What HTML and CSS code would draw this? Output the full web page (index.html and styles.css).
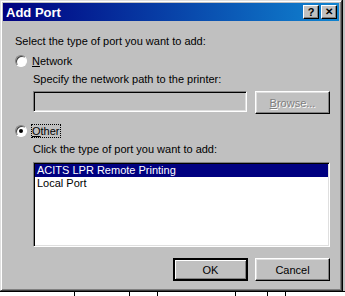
FILE: index.html
```html
<!DOCTYPE html>
<html lang="en">
<head>
    <meta charset="UTF-8">
    <title>Add Port</title>
    <link rel="stylesheet" href="styles.css">
</head>
<body>
    <div class="desk">
        <div class="window">
            <div class="titlebar">
                <span class="title">Add Port</span>
                <div class="title-btns">
                    <span class="tbtn">?</span>
                    <span class="tbtn close">&#x2715;</span>
                </div>
            </div>

            <div class="content">
                <p class="intro">Select the type of port you want to add:</p>

                <div class="option">
                    <span class="radio"></span>
                    <span class="label"><u>N</u>etwork</span>
                </div>
                <div class="sub">
                    <p class="hint">Specify the network path to the printer:</p>
                    <div class="path-row">
                        <div class="field"></div>
                        <button class="btn disabled"><u>B</u>rowse...</button>
                    </div>
                </div>

                <div class="option other">
                    <span class="radio checked"></span>
                    <span class="label focus"><u>O</u>ther</span>
                </div>
                <div class="sub">
                    <p class="hint">Click the type of port you want to add:</p>
                    <ul class="listbox">
                        <li class="selected">ACITS LPR Remote Printing</li>
                        <li>Local Port</li>
                    </ul>
                </div>

                <div class="actions">
                    <button class="btn default">OK</button>
                    <button class="btn">Cancel</button>
                </div>
            </div>
        </div>
        <div class="edge"></div>
    </div>
    <div class="taskstrip">
        <span style="width:74px"></span>
        <span style="width:54px"></span>
        <span style="width:27px"></span>
        <span style="width:77px"></span>
        <span style="width:31px"></span>
        <span style="width:17px"></span>
    </div>
</body>
</html>
```

FILE: styles.css
```css
body {
    margin: 0;
    width: 345px;
    height: 296px;
    overflow: hidden;
    background: #c0c0c0;
    font-family: "Liberation Sans", Arial, sans-serif;
    font-size: 11px;
    color: #000;
}
p { margin: 0; }

.desk {
    display: flex;
    height: 291px;
}
.window {
    width: 342px;
    height: 291px;
    box-sizing: border-box;
    background: #c0c0c0;
    border: 1px solid;
    border-color: #dfdfdf #404040 #404040 #dfdfdf;
    box-shadow: inset 1px 1px 0 #fff, inset -1px -1px 0 #808080;
    padding: 2px;
}
.edge {
    width: 3px;
    background: #c0c0c0;
    border-left: 1px solid #000;
}

.titlebar {
    height: 18px;
    display: flex;
    align-items: center;
    justify-content: space-between;
    background: linear-gradient(to right, #000080, #1084d0);
    padding: 0 2px 0 3px;
}
.title {
    color: #fff;
    font-weight: bold;
    font-size: 13px;
}
.title-btns {
    display: flex;
    gap: 2px;
}
.tbtn {
    width: 16px;
    height: 14px;
    box-sizing: border-box;
    background: #c0c0c0;
    border: 1px solid;
    border-color: #fff #000 #000 #fff;
    box-shadow: inset -1px -1px 0 #808080;
    font-weight: bold;
    font-size: 11px;
    line-height: 12px;
    text-align: center;
}
.tbtn.close { font-size: 10px; }

.content {
    padding: 14px 9px 0 12px;
}
.intro { line-height: 13px; }

.option {
    display: flex;
    align-items: center;
    gap: 5px;
    margin-top: 6px;
    height: 14px;
}
.option.other { margin-top: 10px; }
.radio {
    width: 12px;
    height: 12px;
    box-sizing: border-box;
    border-radius: 50%;
    background: #fff;
    border: 1px solid;
    border-color: #808080 #fff #fff #808080;
    box-shadow: inset 1px 1px 0 #404040;
    position: relative;
}
.radio.checked::after {
    content: "";
    position: absolute;
    left: 3px;
    top: 3px;
    width: 4px;
    height: 4px;
    border-radius: 50%;
    background: #000;
}
.label.focus {
    outline: 1px dotted #000;
    outline-offset: 0;
}

.sub { padding-left: 18px; }
.hint {
    margin-top: 5px;
    line-height: 13px;
}

.path-row {
    display: flex;
    gap: 8px;
    margin-top: 5px;
}
.field {
    width: 214px;
    height: 21px;
    box-sizing: border-box;
    background: #c0c0c0;
    border: 1px solid;
    border-color: #808080 #fff #fff #808080;
    box-shadow: inset 1px 1px 0 #000, inset -1px -1px 0 #dfdfdf;
}

.btn {
    width: 75px;
    height: 23px;
    box-sizing: border-box;
    background: #c0c0c0;
    border: 1px solid;
    border-color: #fff #000 #000 #fff;
    box-shadow: inset -1px -1px 0 #808080, inset 1px 1px 0 #dfdfdf;
    font-family: inherit;
    font-size: 11px;
    padding: 0;
    color: #000;
}
.btn.disabled {
    color: #808080;
    text-shadow: 1px 1px 0 #fff;
}
.btn.default {
    outline: 1px solid #000;
    outline-offset: -1px;
    border-width: 2px;
    border-color: #000;
    box-shadow: inset 1px 1px 0 #fff, inset -1px -1px 0 #808080;
}

.listbox {
    list-style: none;
    margin: 6px 0 0;
    padding: 1px;
    width: 297px;
    height: 85px;
    box-sizing: border-box;
    background: #fff;
    border: 1px solid;
    border-color: #808080 #fff #fff #808080;
    box-shadow: inset 1px 1px 0 #000, inset -1px -1px 0 #dfdfdf;
}
.listbox li {
    height: 13px;
    line-height: 13px;
    padding-left: 2px;
}
.listbox li.selected {
    background: #000080;
    color: #fff;
}

.actions {
    display: flex;
    justify-content: flex-end;
    gap: 7px;
    margin-top: 11px;
}

.taskstrip {
    display: flex;
    height: 5px;
    border-top: 1px solid #000;
    background: #fff;
}
.taskstrip span {
    border-right: 1px solid #000;
}
```
